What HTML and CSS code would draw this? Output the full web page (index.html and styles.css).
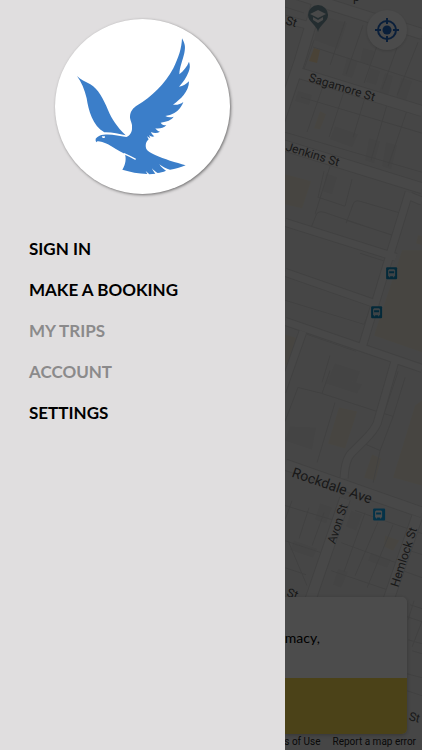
FILE: index.html
```html
<!DOCTYPE html>
<html lang="en">

<head>
    <meta charset="UTF-8">
    <meta name="viewport" content="width=device-width, initial-scale=1.0">
    <title>Booking</title>
    <link rel="stylesheet" href="styles.css">
</head>

<body>
    <div class="app">
        <aside class="drawer">
            <div class="logo">
                <svg viewBox="15 12 525 525" aria-hidden="true">
                    <g fill="#3b7ec9">
                        <path d="M81 183C94 200 104 224 110 250C115 285 128 333 163 352C185 351 206 357 227 361C200 334 186 313 174 285C160 252 145 222 121 208C105 199 92 194 81 183Z" />
                        <path d="M396 70C405 86 407 96 403 114C398 137 389 155 388 178C400 168 412 154 417 140C421 152 420 160 416 170C410 187 399 201 387 215C399 214 410 206 417 199C417 214 411 228 401 240C392 251 381 260 369 269C381 271 392 267 400 261C394 277 386 286 373 294C365 299 355 302 346 303C354 308 363 308 371 305C364 315 352 320 332 323C336 330 343 331 349 331C341 339 328 342 316 340C320 346 324 349 330 350C322 355 312 355 303 351C305 357 309 361 313 364C307 367 302 364 297 360L301 370L291 364L296 373C288 380 285 391 289 402C295 414 330 427 360 437C377 442 392 446 407 451C391 458 376 462 360 464C348 461 338 456 328 448C333 456 340 462 348 467C339 471 330 473 323 474C316 470 311 466 306 460C309 467 312 472 316 476L298 478L287 468L292 477C265 476 240 471 217 464C227 449 229 432 225 417C205 407 189 397 174 388C160 382 148 378 142 379L140 382L137 378L137 371C142 364 151 359 161 359C184 356 207 363 229 366C239 362 247 351 246 338C248 325 239 316 240 304C241 289 249 279 262 271C304 246 345 207 370 160C386 127 395 100 396 70Z" />
                    </g>
                    <path d="M222 416Q238 423 257 433" fill="none" stroke="#fff" stroke-width="4" />
                    <path d="M155 364L165 364L164 369L158 369Z" fill="#fff" />
                </svg>
            </div>
            <nav>
                <ul class="menu">
                    <li><button type="button">SIGN IN</button></li>
                    <li><button type="button">MAKE A BOOKING</button></li>
                    <li><button type="button" disabled>MY TRIPS</button></li>
                    <li><button type="button" disabled>ACCOUNT</button></li>
                    <li><button type="button">SETTINGS</button></li>
                </ul>
            </nav>
        </aside>

        <main class="content">
            <svg class="map" viewBox="285 0 137 750" preserveAspectRatio="xMinYMin slice">
                <rect x="285" width="1000" height="750" fill="#ebebeb" />
                <!-- buildings and shops -->
                <g fill="#e3e3e3">
                    <path d="M320 15L347 23L338 49L314 40Z" />
                    <path d="M347 58L358 61L352 78L342 75Z" />
                    <path d="M363 48L374 51L370 65L360 62Z" />
                    <path d="M370 68L380 71L376 85L366 82Z" />
                    <path d="M385 73L393 76L388 95L379 92Z" />
                    <path d="M401 78L412 81L406 100L396 97Z" />
                    <path d="M298 91L312 95L309 105L295 101Z" />
                    <path d="M335 126L358 134L352 147L330 139Z" />
                    <path d="M369 138L380 141L374 163L365 160Z" />
                    <path d="M386 142L397 145L391 169L382 166Z" />
                    <path d="M326 173L337 177L332 194L323 191Z" />
                    <path d="M330 374L362 384L357 393L326 383Z" />
                    <path d="M290 426L316 427L312 449L285 440Z" />
                    <path d="M335 363L360 371L356 382L330 374Z" />
                    <path d="M351 510L362 514L356 530L346 526Z" />
                    <path d="M320 503L332 507L326 523L315 519Z" />
                    <path d="M294 540L317 548L313 557L290 549Z" />
                    <path d="M338 568L348 571L341 587L333 584Z" />
                    <path d="M371 552L391 559L387 567L368 560Z" />
                </g>
                <g fill="#efe8d9">
                    <path d="M314 48L320 50L317 63L309 61Z" fill="#f7dfb8" />
                    <path d="M285 174L311 181L302 208L285 204Z" />
                    <path d="M418 235L422 236V245L416 243Z" />
                    <path d="M402 250H422V352L374 335Z" />
                    <path d="M285 334L298 338L290 365L285 364Z" />
                    <path d="M339 407L357 411L345 448L328 443Z" />
                    <path d="M372 454L381 458L375 480L364 477Z" />
                    <path d="M415 405L422 400V485L393 477Z" />
                    <path d="M385 535L399 540L393 550L384 546Z" />
                    <path d="M320 111L326 114L320 129L314 128Z" />
                </g>
                <!-- lot lines -->
                <g fill="none" stroke="#d8d8d8" stroke-width="1">
                    <path d="M313 47L422 82M301 97L422 133M285 132L422 172M345 21L330 65M363 25L346 74M382 31L364 83M400 39L382 89M418 42L397 95M314 40L304 69M324 83L307 132M344 91L329 137M365 97L353 137M387 104L371 160M407 110L388 166" />
                    <path d="M285 7L304 13M310 4L422 39M330 166L315 214M324 171L318 197L345 206M345 206L352 179M346 223L353 204Q355 199 360 201L401 213M346 220L399 237M310 230L316 215Q318 210 324 212L392 235" />
                    <path d="M360 253L385 261L373 298M285 300L364 324M364 324L372 304M307 334L356 351M330 355L322 382M322 393L374 410L384 413L398 371M298 387L322 393L330 370M298 387L285 421M335 402L317 462M384 413L393 416L405 377M393 416L380 450L373 482M380 450L366 444" />
                    <path d="M285 505L338 521M285 540L330 555M292 500L285 519M309 507L299 538M324 512L312 545M338 518L325 552M288 540L307 585M285 567L306 574M365 512L344 571M378 521L355 575M393 524L367 587M355 510L422 533M341 542L404 565M331 570L390 590M400 547L422 554M394 567L422 577" />
                    <path d="M410 604L422 608M407 616L422 621M408 639L422 643M414 600L408 619M422 620L412 646M407 673L422 677M407 690L422 695M412 650L422 653" />
                </g>
                <!-- streets, edge first and fill on top -->
                <g fill="none" stroke="#d9d9d9">
                    <path d="M290 -8L422 34M319 -3L300 60L278 125M299 73L422 111M280 144L422 188M285 464L422 512M345 498L308 606M417 516L386 606" stroke-width="12" />
                    <path d="M285 19L307 25M285 222L396 257M409 192L390 254L362 347M285 272L374 303M285 321L422 368M303 331L282 391M395 360L377 423Q374 430 365 439L352 452Q345 458 344 478M410 196L422 201" stroke-width="9" />
                </g>
                <g fill="none" stroke="#f0f0f0">
                    <path d="M290 -8L422 34M319 -3L300 60L278 125M299 73L422 111M280 144L422 188M285 464L422 512M345 498L308 606M417 516L386 606" stroke-width="10" />
                    <path d="M285 19L307 25M285 222L396 257M409 192L390 254L362 347M285 272L374 303M285 321L422 368M303 331L282 391M395 360L377 423Q374 430 365 439L352 452Q345 458 344 478M410 196L422 201" stroke-width="7" />
                </g>
                <g class="street">
                    <text transform="translate(285 24) rotate(17)">St</text>
                    <text transform="translate(308 81) rotate(17)">Sagamore St</text>
                    <text transform="translate(285 150) rotate(17)">Jenkins St</text>
                    <text class="avenue" transform="translate(291 476) rotate(19)">Rockdale Ave</text>
                    <text transform="translate(335 544) rotate(-72)">Avon St</text>
                    <text transform="translate(398 587) rotate(-72)">Hemlock St</text>
                    <text transform="translate(286 595) rotate(20)">St</text>
                    <text transform="translate(399 717) rotate(14)">e St</text>
                    <text transform="translate(353 1)">p</text>
                </g>
                <!-- school pin -->
                <path d="M318 32C317 25 308 22 308 15A10 10 0 0 1 328 15C328 22 319 25 318 32Z" fill="#7897a0" />
                <path d="M310 14L318 10L326 14L318 18ZM313 17L318 20L323 17V20L318 23L313 20Z" fill="#f4f4f4" />
                <!-- bus stops -->
                <g id="stops">
                    <g transform="translate(386 267)">
                        <rect width="11" height="12" rx="1" fill="#0f8bc0" />
                        <path d="M3 2H8L9 3V9H8V10H7V9H4V10H3V9H2V3ZM3 4V6H8V4Z" fill="#cfe2ea" fill-rule="evenodd" />
                    </g>
                    <g transform="translate(371 306)">
                        <rect width="11" height="12" rx="1" fill="#0f8bc0" />
                        <path d="M3 2H8L9 3V9H8V10H7V9H4V10H3V9H2V3ZM3 4V6H8V4Z" fill="#cfe2ea" fill-rule="evenodd" />
                    </g>
                    <g transform="translate(373 508)">
                        <rect width="12" height="12" rx="1" fill="#10a8f0" />
                        <path d="M3 2H8L9 3V9H8V10H7V9H4V10H3V9H2V3ZM3 4V6H8V4Z" fill="#fff" fill-rule="evenodd" />
                    </g>
                </g>
            </svg>
            <div class="controls">
                <button type="button" class="locate" aria-label="My location">
                    <svg viewBox="0 0 24 24" aria-hidden="true">
                        <circle cx="12" cy="12" r="9" fill="none" stroke="#2468c4" stroke-width="2" />
                        <circle cx="12" cy="12" r="4.5" fill="#2468c4" />
                        <path d="M12 0V6M12 18V24M0 12H6M18 12H24" stroke="#2468c4" stroke-width="2" />
                    </svg>
                </button>
                <div class="card">
                    <p>macy,</p>
                    <div class="card-action"></div>
                </div>
                <footer class="credits">
                    <a href="#">ms of Use</a>
                    <a href="#">Report a map error</a>
                </footer>
            </div>
        </main>
    </div>
</body>

</html>
```

FILE: styles.css
```css
* {
    box-sizing: border-box;
}

body {
    margin: 0;
    font-family: Lato, sans-serif;
}

.app {
    display: grid;
    grid-template-columns: 67.5% 1fr;
    min-height: 100vh;
}

.drawer {
    background-color: #e0dedf;
    padding-bottom: 24px;
}

.logo {
    width: 175px;
    height: 175px;
    margin: 19px auto 34px;
    border-radius: 50%;
    background: white;
    box-shadow: 1px 1px 3px rgba(0, 0, 0, 0.5);
}

.logo svg {
    display: block;
    width: 100%;
    height: 100%;
}

.menu {
    list-style: none;
    margin: 0;
    padding: 0 29px;
}

.menu button {
    display: block;
    width: 100%;
    height: 41px;
    padding: 0;
    border: none;
    background: none;
    color: #000;
    font: bold 17px Lato, sans-serif;
    text-align: left;
    white-space: nowrap;
    cursor: pointer;
}

.menu button:disabled {
    color: #8b8a8b;
    cursor: default;
}

.content {
    position: relative;
    overflow: hidden;
    background-color: #ebebeb;
}

/* dims everything behind the open drawer */
.content::after {
    content: "";
    position: absolute;
    inset: 0;
    background: rgba(0, 0, 0, 0.7);
}

.map {
    position: absolute;
    width: 100%;
    height: 100%;
}

.street {
    font: 12px Roboto, sans-serif;
    fill: #555;
}

.street .avenue {
    font-size: 14px;
}

.controls {
    position: relative;
    display: flex;
    flex-direction: column;
    height: 100%;
    padding-top: 10px;
}

.locate {
    display: flex;
    align-items: center;
    justify-content: center;
    align-self: flex-end;
    width: 40px;
    height: 40px;
    margin-right: 15px;
    padding: 0;
    border: none;
    border-radius: 50%;
    background: #fafafa;
    box-shadow: 0 1px 3px rgba(0, 0, 0, 0.15);
}

.locate svg {
    width: 24px;
    height: 24px;
}

.card {
    margin: auto 15px 0 0;
    border-radius: 0 5px 5px 0;
    background: white;
    box-shadow: 0 1px 4px rgba(0, 0, 0, 0.25);
    overflow: hidden;
}

.card p {
    margin: 0;
    color: #000;
    font-size: 14px;
    line-height: 81px;
}

.card-action {
    height: 56px;
    background-color: #fadc50;
}

.credits {
    display: flex;
    justify-content: flex-end;
    gap: 12px;
    padding: 0 6px 0 0;
    font: 10px/16px Roboto, sans-serif;
    white-space: nowrap;
}

.credits a {
    color: #222;
    text-decoration: none;
}
```
